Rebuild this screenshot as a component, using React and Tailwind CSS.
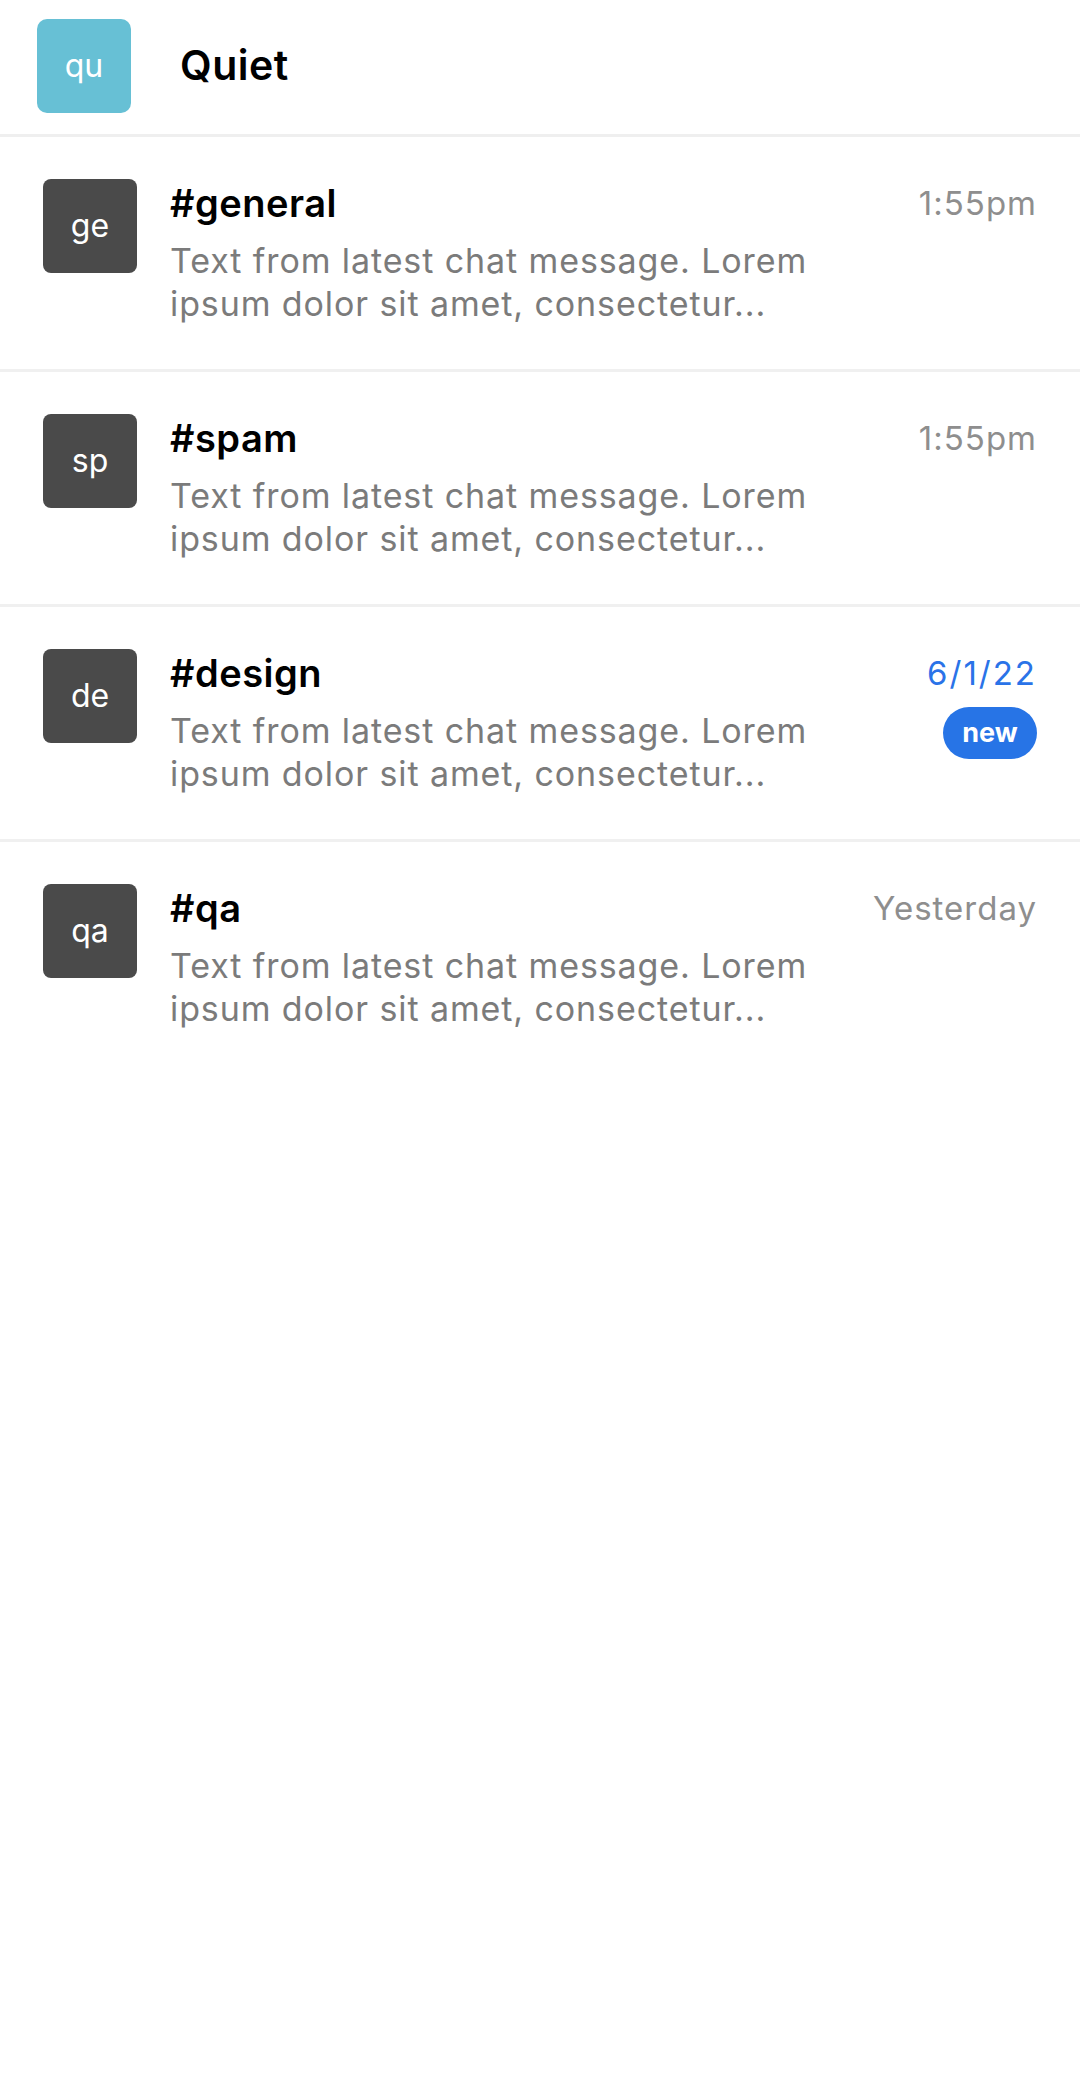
import React from "react";

const channels = [
    { short: "ge", name: "#general", time: "1:55pm" },
    { short: "sp", name: "#spam", time: "1:55pm" },
    { short: "de", name: "#design", time: "6/1/22", unread: true },
    { short: "qa", name: "#qa", time: "Yesterday" },
];

const preview = "Text from latest chat message. Lorem ipsum dolor sit amet, consectetur...";

const ChannelRow = ({ channel, last }) => {
    return (
        <div className={`flex px-[43px] pt-[42px] pb-[44px] ${last ? "" : "border-b-[3px] border-[#f0f0f0]"}`}>
            {/* avatar */}
            <div className="flex h-[94px] w-[94px] shrink-0 items-center justify-center rounded-[8px] bg-[#4a4a4a] text-[32px] text-white">
                {channel.short}
            </div>

            {/* name + message */}
            <div className="ml-[33px] flex min-w-0 flex-1 flex-col pt-[2px]">
                <span className="text-[38px] font-semibold leading-[44px] tracking-[0.5px] text-black">
                    {channel.name}
                </span>
                <p className="mt-[14px] w-[660px] text-[34px] leading-[43px] tracking-[0.9px] text-[#7b7b7b]">
                    {preview}
                </p>
            </div>

            {/* time + badge */}
            <div className="flex shrink-0 flex-col items-end pt-[2px]">
                <span className={`text-[33px] leading-[44px] tracking-[1px] ${channel.unread ? "text-[#2a73e8] tracking-[2px]" : "text-[#8e8e8e]"}`}>
                    {channel.time}
                </span>
                {channel.unread && (
                    <span className="mt-[12px] flex h-[52px] w-[94px] items-center justify-center rounded-full bg-[#2774e6] text-[27px] font-bold text-white">
                        new
                    </span>
                )}
            </div>
        </div>
    );
};

export default function App() {
    return (
        <div className="min-h-[2085px] w-full bg-white font-['Inter',sans-serif]">
            {/* header */}
            <div className="flex h-[137px] items-center border-b-[3px] border-[#efefef] pl-[37px] pb-[3px]">
                <div className="flex h-[94px] w-[94px] items-center justify-center rounded-[10px] bg-[#67c0d5] text-[32px] text-white">
                    qu
                </div>
                <span className="ml-[49px] text-[41px] font-semibold tracking-[0.5px] text-black">Quiet</span>
            </div>

            {channels.map((channel, index) => (
                <ChannelRow key={index} channel={channel} last={index === channels.length - 1} />
            ))}
        </div>
    );
}
